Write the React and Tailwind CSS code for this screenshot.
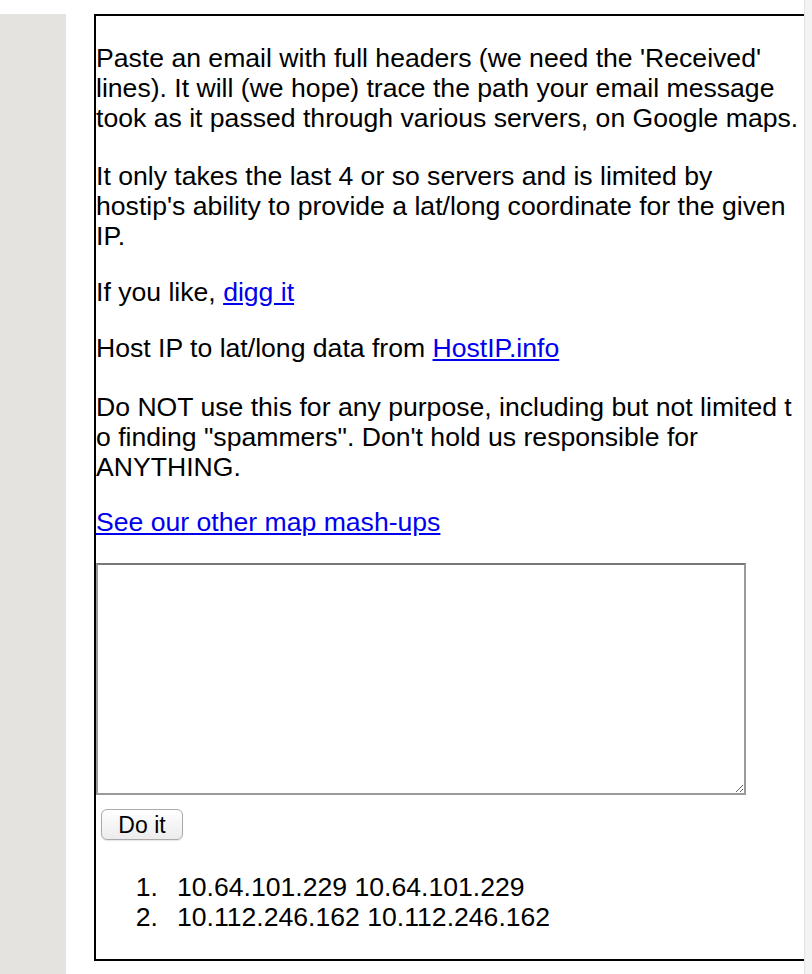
import React from 'react';

const linkCls = 'text-[#0000ee] underline';

const App = () => {
  return (
    <div className="flex min-h-screen bg-white text-black" style={{ fontFamily: '"Liberation Sans", Arial, sans-serif' }}>
      <div className="flex flex-1 pt-[14px]">
        <div className="w-[66px] shrink-0 bg-[#e4e3df]" />
        <div className="ml-[28px] flex-1 self-start overflow-hidden border-t-2 border-l-2 border-b-2 border-black text-[26.6px] leading-[30px]">
          <p className="mt-[27px] whitespace-nowrap">
            Paste an email with full headers (we need the 'Received'<br />
            lines). It will (we hope) trace the path your email message<br />
            took as it passed through various servers, on Google maps.
          </p>
          <p className="mt-[28px] whitespace-nowrap">
            It only takes the last 4 or so servers and is limited by<br />
            hostip's ability to provide a lat/long coordinate for the given<br />
            IP.
          </p>
          <p className="mt-[26px] whitespace-nowrap">
            If you like, <a href="#" className={linkCls}>digg it</a>
          </p>
          <p className="mt-[26px] whitespace-nowrap">
            Host IP to lat/long data from <a href="#" className={linkCls}>HostIP.info</a>
          </p>
          <p className="mt-[29px] whitespace-nowrap">
            Do NOT use this for any purpose, including but not limited t<br />
            o finding "spammers". Don't hold us responsible for<br />
            ANYTHING.
          </p>
          <p className="mt-[25px] whitespace-nowrap">
            <a href="#" className={linkCls}>See our other map mash-ups</a>
          </p>
          <textarea className="mt-[26px] block h-[232px] w-[650px] resize border-2 border-[#9a9a9a] border-t-[#777777] bg-white" />
          <button className="mt-[14px] ml-[5px] block h-[31px] w-[82px] rounded-[6px] border border-[#a9a9a9] bg-gradient-to-b from-white to-[#ececec] text-[23px] leading-[28px] shadow-[0_1px_1px_rgba(0,0,0,0.1)]">
            Do it
          </button>
          <ol className="mt-[32px] mb-[27px]">
            {['10.64.101.229 10.64.101.229', '10.112.246.162 10.112.246.162'].map((ip, i) => (
              <li key={i} className="flex whitespace-nowrap">
                <span className="w-[62px] text-right">{i + 1}.</span>
                <span className="ml-[19px]">{ip}</span>
              </li>
            ))}
          </ol>
        </div>
      </div>
      <div className="w-[8px] shrink-0 border-l border-[#e2e2e2] bg-[#f3f3f3]" />
    </div>
  );
};

export default App;
